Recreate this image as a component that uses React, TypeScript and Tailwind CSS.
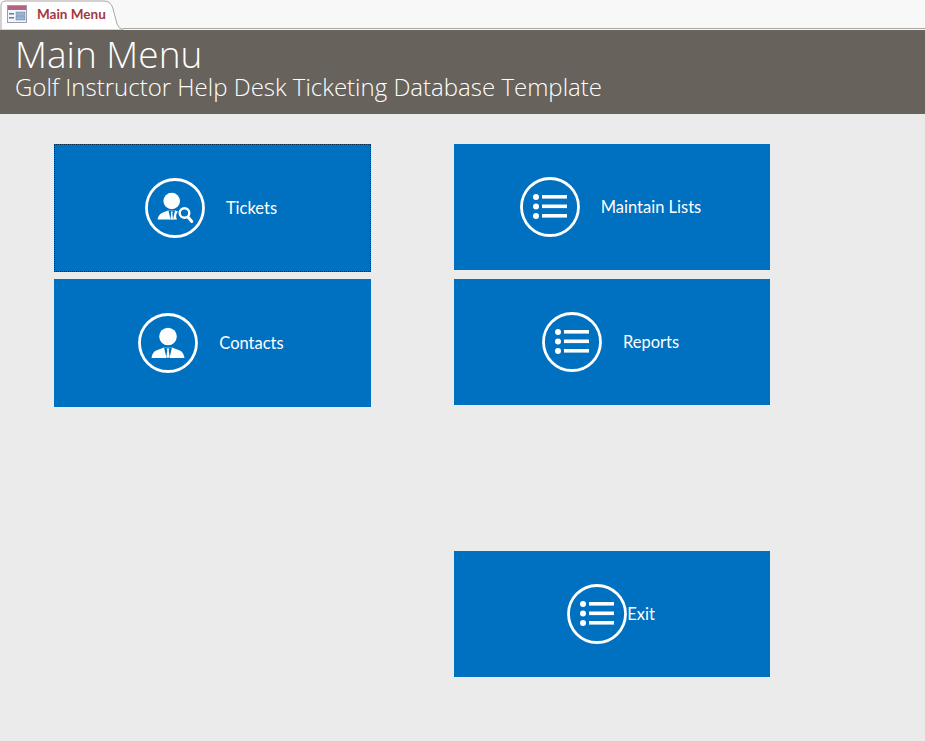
import type { ReactNode } from 'react';

function Ring({ children }: { children: ReactNode }) {
  return (
    <svg width="60" height="60" viewBox="0 0 60 60" className="shrink-0">
      <circle cx="30" cy="30" r="28.5" fill="none" stroke="#fff" strokeWidth="2.8" />
      {children}
    </svg>
  );
}

function ListIcon() {
  return (
    <Ring>
      <circle cx="16" cy="20" r="3" fill="#fff" />
      <circle cx="16" cy="29.5" r="3" fill="#fff" />
      <circle cx="16" cy="39" r="3" fill="#fff" />
      <rect x="22" y="18" width="25" height="3.6" fill="#fff" />
      <rect x="22" y="27.500" width="25" height="3.6" fill="#fff" />
      <rect x="22" y="37" width="25" height="3.6" fill="#fff" />
    </Ring>
  );
}

function PersonIcon() {
  return (
    <Ring>
      <circle cx="30" cy="23.500" r="8.800" fill="#fff" />
      <path d="M13.500 45c.8-4.500 2.500-6.800 6-8l6.500-2.500h8l6.500 2.500c3.500 1.200 5.200 3.500 6 8z" fill="#fff" />
      <path d="M26 34.500l2.500 10.500h3l2.500-10.500z" fill="#0070c0" />
      <path d="M28.700 35.500h2.600l-.6 2 1 6.500-1.700 1-1.700-1 1-6.500z" fill="#fff" />
    </Ring>
  );
}

function SearchPersonIcon() {
  return (
    <Ring>
      <circle cx="26.700" cy="23" r="8.300" fill="#fff" />
      <path d="M12.500 41.500c.8-3.800 2.500-6 5.500-7l5-2h7l3 1c-2 2-2.500 5.500-1 8z" fill="#fff" />
      <path d="M23.500 32.500l2 9h2.500l2-9z" fill="#0070c0" />
      <path d="M25.800 33.500h1.900l-.3 2 .6 6h-2.500l.6-6z" fill="#fff" />
      <circle cx="39.500" cy="35" r="4.800" fill="#0070c0" stroke="#fff" strokeWidth="2.400" />
      <path d="M43 39l3.800 4.500" stroke="#fff" strokeWidth="3" strokeLinecap="round" />
    </Ring>
  );
}

function MenuButton({ label, icon, gap, tall, focused }: { label: string; icon: ReactNode; gap: string; tall?: boolean; focused?: boolean }) {
  return (
    <button
      className={`flex w-full items-center justify-center bg-[#0070c0] pr-[3px] pb-[1px] text-white ${gap} ${tall ? 'h-[128px]' : 'h-[126px]'} ${focused ? 'outline-1 -outline-offset-1 outline-dotted outline-[#0b2a4a]' : ''}`}
    >
      {icon}
      <span className="font-['Lato',sans-serif] text-[16.500px] leading-5">{label}</span>
    </button>
  );
}

export default function App() {
  return (
    <div className="flex h-[741px] w-[925px] flex-col overflow-hidden bg-[#ebebeb]">
      <div className="flex h-[30px] items-end bg-[#f8f8f8]">
        <div className="relative flex h-[30px] w-[123px] items-center gap-[10px] pl-[7px]">
          <svg width="124" height="30" viewBox="0 0 124 30" className="absolute top-0 left-0">
            <path d="M1 30V6Q1 1 6 1H104Q110 1 112.500 7L117 24Q119 29 123 29.500V30Z" fill="#fff" stroke="#a9a7a5" strokeWidth="1" />
          </svg>
          <svg width="20" height="18" viewBox="0 0 20 18" className="relative mt-[-2px] shrink-0">
            <rect x="0.500" y="0.500" width="19" height="17" fill="#f4f6fa" stroke="#9a9eab" />
            <rect x="1" y="1" width="18" height="4" fill="#b5647f" />
            <rect x="2" y="8" width="5" height="1.500" fill="#5a7fa8" />
            <rect x="2" y="12" width="5" height="1.500" fill="#5a7fa8" />
            <rect x="9" y="7" width="9" height="3.500" fill="#9fb4cc" stroke="#5a7fa8" strokeWidth="0.500" />
            <rect x="9" y="11.500" width="9" height="3.500" fill="#9fb4cc" stroke="#5a7fa8" strokeWidth="0.500" />
          </svg>
          <span className="relative mt-[-1px] font-['Lato',sans-serif] text-[13.500px] font-bold whitespace-nowrap text-[#a4373a]">Main Menu</span>
        </div>
        <div className="mb-px h-px flex-1 bg-[#a9a7a5]" />
      </div>

      <header className="h-[84px] bg-[#67625c] pl-[15px] font-['Open_Sans',sans-serif] font-light text-white">
        <h1 className="pt-[3px] text-[37px] leading-[42px]">Main Menu</h1>
        <p className="-mt-[1px] text-[24px] leading-[26px]">Golf Instructor Help Desk Ticketing Database Template</p>
      </header>

      <main className="flex gap-[83px] pt-[30px] pl-[54px]">
        <div className="flex w-[317px] flex-col gap-[7px]">
          <MenuButton label="Tickets" icon={<SearchPersonIcon />} gap="gap-[21px]" tall focused />
          <MenuButton label="Contacts" icon={<PersonIcon />} gap="gap-[21px]" tall />
        </div>
        <div className="flex w-[316px] flex-col">
          <MenuButton label="Maintain Lists" icon={<ListIcon />} gap="gap-[21px]" />
          <div className="mt-[9px]">
            <MenuButton label="Reports" icon={<ListIcon />} gap="gap-[21px]" />
          </div>
          <div className="mt-[146px]">
            <MenuButton label="Exit" icon={<ListIcon />} gap="gap-0 pl-[1px]" />
          </div>
        </div>
      </main>
    </div>
  );
}
